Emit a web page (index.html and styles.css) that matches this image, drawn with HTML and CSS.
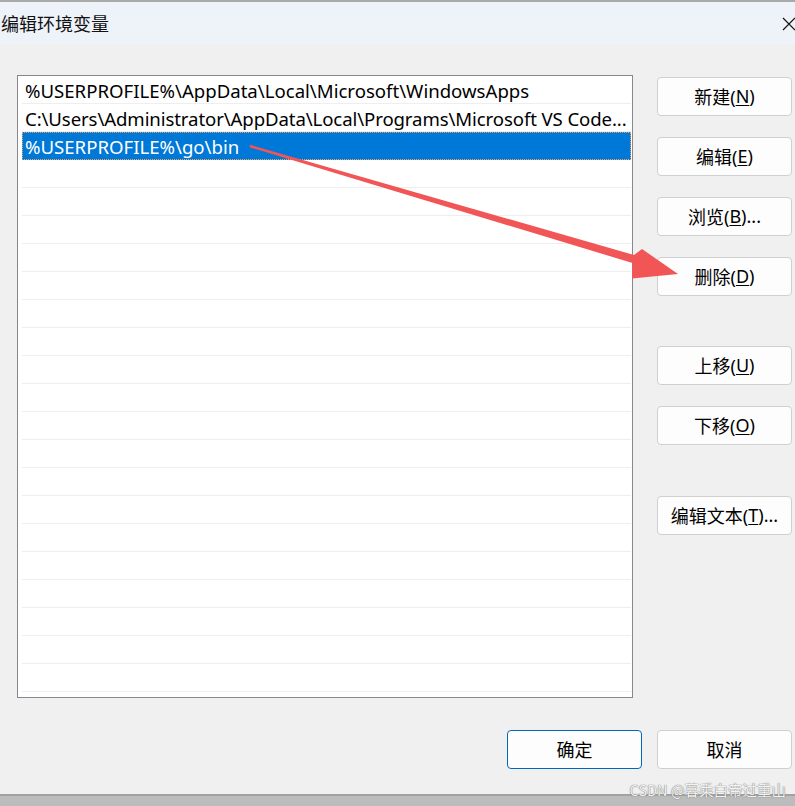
FILE: index.html
```html
<!DOCTYPE html>
<html lang="zh-CN">
<head>
<meta charset="utf-8">
<title>编辑环境变量</title>
<link rel="stylesheet" href="styles.css">
</head>
<body>
<div class="window">
  <div class="top-edge"></div>
  <div class="titlebar">
    <span class="title">编辑环境变量</span>
    <svg class="close" width="14" height="14" viewBox="0 0 14 14"><path d="M1 1 L13 13 M13 1 L1 13" stroke="#111" stroke-width="1.2" fill="none"/></svg>
  </div>
  <div class="main">
    <div class="content">
      <div class="list">
        <div class="row">%USERPROFILE%\AppData\Local\Microsoft\WindowsApps</div>
        <div class="row tight">C:\Users\Administrator\AppData\Local\Programs\Microsoft VS Code...</div>
        <div class="row selected">%USERPROFILE%\go\bin</div>
        <div class="row"></div><div class="row"></div><div class="row"></div><div class="row"></div>
        <div class="row"></div><div class="row"></div><div class="row"></div><div class="row"></div>
        <div class="row"></div><div class="row"></div><div class="row"></div><div class="row"></div>
        <div class="row"></div><div class="row"></div><div class="row"></div><div class="row"></div>
        <div class="row"></div><div class="row"></div><div class="row"></div>
      </div>
      <div class="actions">
        <button class="btn">新建(<u>N</u>)</button>
        <button class="btn">编辑(<u>E</u>)</button>
        <button class="btn">浏览(<u>B</u>)...</button>
        <button class="btn">删除(<u>D</u>)</button>
        <button class="btn gap-lg">上移(<u>U</u>)</button>
        <button class="btn">下移(<u>O</u>)</button>
        <button class="btn gap-lg2">编辑文本(<u>T</u>)...</button>
      </div>
    </div>
    <div class="footer">
      <button class="btn primary">确定</button>
      <button class="btn">取消</button>
    </div>
  </div>
  <div class="bottom-edge"></div>
  <svg class="arrow" width="795" height="806" viewBox="0 0 795 806">
    <polygon points="250,144.8 634,255 642,249 678,274 632,278.5 632.5,263 249.5,147.2" fill="#f25555"/>
  </svg>
  <div class="watermark">CSDN @暮乘白帝过重山</div>
</div>
</body>
</html>
```
FILE: styles.css
```css
* { box-sizing: border-box; }
html, body { margin: 0; padding: 0; }
body {
  width: 795px;
  height: 806px;
  overflow: hidden;
  background: #f0f0f0;
  font-family: "Noto Sans", "Noto Sans CJK SC", sans-serif;
  color: #000;
}
.window {
  position: relative;
  width: 795px;
  height: 806px;
  display: flex;
  flex-direction: column;
}
.top-edge {
  height: 2px;
  background: #a9a9a9;
}
.titlebar {
  height: 42px;
  background: #eef3f9;
  display: flex;
  align-items: center;
  justify-content: space-between;
  padding: 0 0 0 1px;
}
.title {
  font-family: "Noto Sans CJK SC", sans-serif;
  font-size: 18px;
  color: #111;
}
.close {
  margin-right: -1px;
  margin-top: 1px;
}
.main {
  height: 750px;
  display: flex;
  flex-direction: column;
  padding: 31px 3px 0 17px;
}
.content {
  display: flex;
  gap: 24px;
}
.list {
  width: 616px;
  height: 623px;
  border: 1px solid #88868f;
  background: #fff;
  padding: 0 1px 0 4px;
  overflow: hidden;
}
.row {
  height: 28px;
  border-bottom: 1px solid #eeeeee;
  padding: 2px 0 0 3px;
  font-size: 18.6px;
  line-height: 26px;
  white-space: nowrap;
  overflow: hidden;
}
.row.tight {
  letter-spacing: -0.1px;
}
.row.selected {
  background: #0078d7;
  color: #fff;
  outline: 1px dotted #f1a25a;
  outline-offset: -1px;
  border-bottom-color: #0078d7;
}
.actions {
  display: flex;
  flex-direction: column;
  gap: 21px;
  padding-top: 2px;
}
.btn {
  width: 135px;
  height: 39px;
  background: #fdfdfd;
  border: 1px solid #d0d0d0;
  border-radius: 4px;
  font-family: "Noto Sans", "Noto Sans CJK SC", sans-serif;
  font-size: 18px;
  color: #000;
  padding: 0 0 1px;
  display: flex;
  align-items: center;
  justify-content: center;
}
.btn u { text-underline-offset: 2px; }
.gap-lg { margin-top: 29px; }
.gap-lg2 { margin-top: 30px; }
.footer {
  display: flex;
  justify-content: flex-end;
  gap: 15px;
  margin-top: 32px;
}
.btn.primary {
  border-color: #0067c0;
}
.bottom-edge {
  height: 12px;
  background: linear-gradient(#a2a2a2 0, #a2a2a2 2px, #bcbcbc 2px);
}
.arrow {
  position: absolute;
  left: 0;
  top: 0;
  pointer-events: none;
}
.watermark {
  position: absolute;
  right: 9px;
  top: 780px;
  font-family: "Noto Sans CJK SC", sans-serif;
  font-size: 14.5px;
  line-height: 20px;
  color: rgba(255,255,255,0.92);
  text-shadow: 0 0 1px #777, 0 0 1px #777;
  white-space: nowrap;
}
```
